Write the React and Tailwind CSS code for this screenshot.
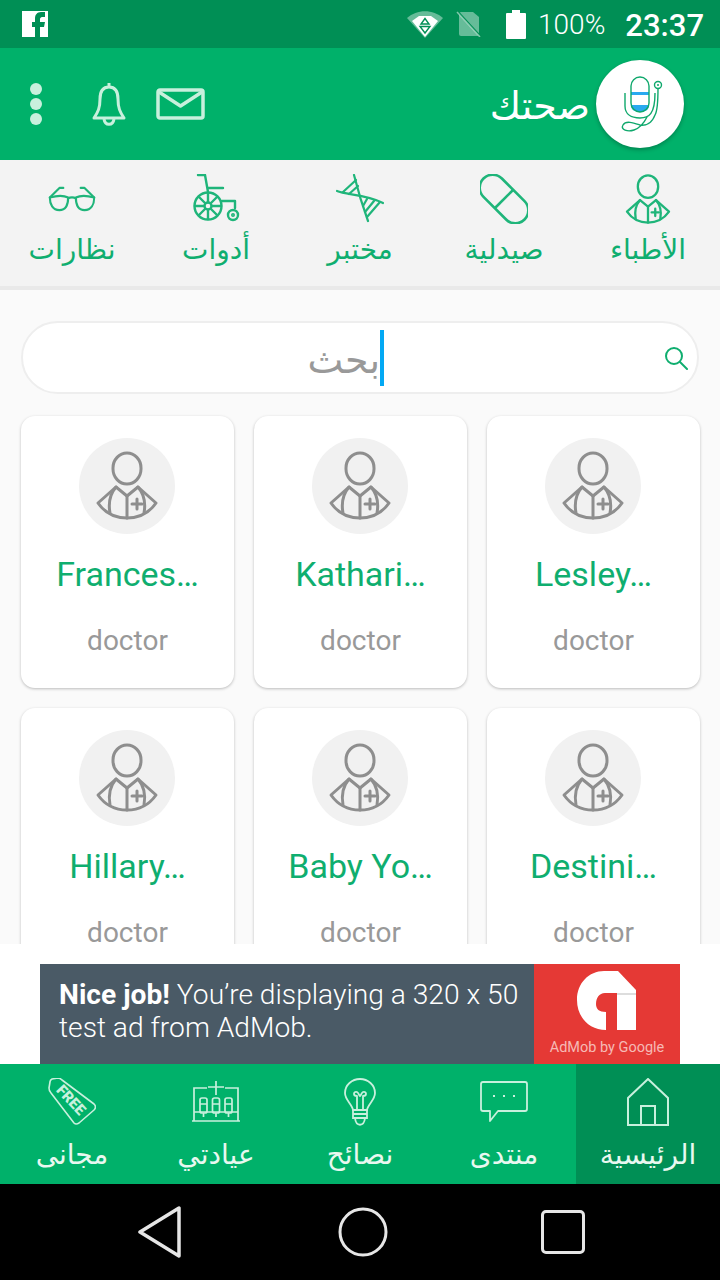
import React from "react";

const arabic = { fontFamily: '"Noto Sans", "DejaVu Sans", sans-serif' };

const DoctorIcon = ({ className, viewBox = "0 0 96 96", strokeWidth = 3 }) => (
  <svg className={className} viewBox={viewBox} fill="none" stroke="currentColor" strokeWidth={strokeWidth} strokeLinejoin="round" strokeLinecap="round">
    <rect x="34" y="15" width="28" height="31" rx="14" ry="15" />
    <path d="M19 65 L37 49 L48 58 L59 49 L77 65 C70 75 60 80 48 80 C36 80 26 75 19 65 Z" />
    <path d="M37 49 C31 56 29 64 31 75" />
    <path d="M59 49 C65 56 67 64 65 75" />
    <path d="M48 58 V80" />
    <path d="M53 66 H63 M58 61 V71" />
  </svg>
);

const PillIcon = ({ className }) => (
  <svg className={className} viewBox="0 0 48 50" fill="none" stroke="currentColor" strokeWidth="2.6">
    <rect x="-5" y="12" width="58" height="26" rx="13" transform="rotate(45 24 25)" />
    <path d="M15 34 L33 16" />
  </svg>
);

const DnaIcon = ({ className }) => (
  <svg className={className} viewBox="0 0 48 50" fill="none" stroke="currentColor" strokeWidth="2.2" strokeLinecap="round">
    <path d="M18 1 C21 13 24 25 32 47" />
    <path d="M1 17 C10 21 30 20 47 29" />
    <path d="M7 18 L20 6 M13 20 L22 12" />
    <path d="M31 25 L27 32 M38 27 L29 38 M44 28 L31 43" />
  </svg>
);

const WheelchairIcon = ({ className }) => (
  <svg className={className} viewBox="0 0 48 50" fill="none" stroke="currentColor" strokeWidth="2.4" strokeLinecap="round" strokeLinejoin="round">
    <path d="M6 1 H13 L16 18 M16 14 H31 M30 27 H43 V34" />
    <circle cx="16" cy="32" r="13.500" />
    <circle cx="16" cy="32" r="3.500" />
    <path d="M16 19 V28 M16 36 V45 M3 32 H12 M20 32 H29 M7 23 L13 29 M19 35 L25 41 M25 23 L19 29 M13 35 L7 41" />
    <circle cx="41" cy="41" r="5" />
    <circle cx="41" cy="41" r="0.800" />
  </svg>
);

const GlassesIcon = ({ className }) => (
  <svg className={className} viewBox="0 0 48 28" fill="none" stroke="currentColor" strokeWidth="2.2" strokeLinecap="round" strokeLinejoin="round">
    <path d="M1 13 C8 11 16 11 20 13 C20 20 18 26 11 26 C4 26 1 20 1 13 Z" />
    <path d="M47 13 C40 11 32 11 28 13 C28 20 30 26 37 26 C44 26 47 20 47 13 Z" />
    <path d="M20 14 C22 12.500 26 12.500 28 14" />
    <path d="M1 13 L11 3 H15 M47 13 L37 3 H33" />
  </svg>
);

const tabs = [
  { label: "نظارات", icon: <GlassesIcon className="mt-[11px] mb-[12px] h-[27px] w-[48px]" /> },
  { label: "أدوات", icon: <WheelchairIcon className="h-[50px] w-[48px]" /> },
  { label: "مختبر", icon: <DnaIcon className="h-[50px] w-[48px]" /> },
  { label: "صيدلية", icon: <PillIcon className="h-[50px] w-[48px]" /> },
  { label: "الأطباء", icon: <DoctorIcon className="h-[50px] w-[46px]" viewBox="17 13 62 69" strokeWidth={3.2} /> },
];

const doctors = ["Frances…", "Kathari…", "Lesley…", "Hillary…", "Baby Yo…", "Destini…"];

const FreeIcon = ({ className }) => (
  <svg className={className} viewBox="0 0 48 48" fill="none" stroke="currentColor" strokeWidth="1.6" strokeLinejoin="round">
    <path d="M4 1 L10 0 Q12 0 14 2 L46 26 Q49 29 46 32 L31 45 Q28 47 26 45 L3 15 Q1 13 1 10 L2 4 Q2 2 4 1 Z" />
    <text x="0" y="5" textAnchor="middle" transform="translate(23 22) rotate(47)" fill="currentColor" stroke="none" fontSize="15" fontWeight="900" fontFamily="Roboto, sans-serif">FREE</text>
  </svg>
);

const ClinicIcon = ({ className }) => (
  <svg className={className} viewBox="0 0 48 42" fill="none" stroke="currentColor" strokeWidth="1.7">
    <path d="M0 40 H48 M2 40 V7 H15 M33 7 H46 V40 M2 31 H46" />
    <path d="M24 0 V14 M16 6 H32" />
    <rect x="8" y="17" width="7" height="15" rx="2" />
    <rect x="20.500" y="17" width="7" height="15" rx="2" />
    <rect x="33" y="17" width="7" height="15" rx="2" />
    <path d="M8 23 H15 M20.500 23 H27.500 M33 23 H40 M11.500 32 V36 M24 32 V36 M36.500 32 V36" />
  </svg>
);

const BulbIcon = ({ className }) => (
  <svg className={className} viewBox="0 0 32 48" fill="none" stroke="currentColor" strokeWidth="1.8" strokeLinecap="round">
    <path d="M9 32 C8 26 1 22 1 15 C1 7 8 1 16 1 C24 1 31 7 31 15 C31 22 24 26 23 32 Z" />
    <path d="M13 32 V18 M19 32 V18 M13 18 C9 18 9 13 13 14 C15 15 15 18 16 18 C17 18 17 15 19 14 C23 13 23 18 19 18" />
    <path d="M9 32 V40 H23 V32 M9 36 H23 M11 40 C12 49 20 49 21 40" />
  </svg>
);

const ChatIcon = ({ className }) => (
  <svg className={className} viewBox="0 0 48 42" fill="none" stroke="currentColor" strokeWidth="1.8" strokeLinejoin="round">
    <path d="M3 1 H45 Q47 1 47 3 V28 Q47 30 45 30 H18 L10 40 V30 H3 Q1 30 1 28 V3 Q1 1 3 1 Z" />
    <path d="M13 15 h2 M23 15 h2 M33 15 h2" strokeWidth="2" />
  </svg>
);

const HomeIcon = ({ className }) => (
  <svg className={className} viewBox="0 0 42 48" fill="none" stroke="currentColor" strokeWidth="2">
    <path d="M1 47 V20 L21 1 L41 20 V47 Z" />
    <path d="M14 47 V28 H28 V47" />
  </svg>
);

const navItems = [
  { label: "مجانى", icon: <FreeIcon className="h-[48px] w-[48px]" /> },
  { label: "عيادتي", icon: <ClinicIcon className="h-[42px] w-[48px]" /> },
  { label: "نصائح", icon: <BulbIcon className="h-[48px] w-[32px]" /> },
  { label: "منتدى", icon: <ChatIcon className="h-[42px] w-[48px]" /> },
  { label: "الرئيسية", icon: <HomeIcon className="h-[48px] w-[42px]" />, active: true },
];

const Logo = () => (
  <div className="flex h-[88px] w-[88px] items-center justify-center rounded-full bg-white shadow-[0_2px_4px_rgba(0,0,0,0.25)]">
    <svg className="h-[88px] w-[88px]" viewBox="0 0 88 88" fill="none" strokeWidth="1.4">
      <path d="M35 45 H53 C53 50 49 52 44 52 C39 52 35 50 35 45 Z" fill="#29a9f0" />
      <rect x="35" y="32" width="18" height="3" fill="#29a9f0" />
      <rect x="35" y="17" width="18" height="35" rx="9" stroke="#0fa86c" />
      <path d="M29 33 V46 C29 54 35 58 44 58 C53 58 59 54 59 33" stroke="#0fa86c" />
      <path d="M62 28 C62 40 62 50 59 55 C56 63 50 66 44 65 C38 63 30 60 27 65 C24 70 32 72 38 70 C44 68 48 63 51 57" stroke="#0fa86c" />
      <circle cx="62" cy="25" r="3.500" stroke="#0fa86c" />
      <circle cx="62" cy="25" r="1" fill="#0fa86c" />
    </svg>
  </div>
);

const StatusBar = () => (
  <div className="flex h-[48px] items-center justify-between bg-[#008f55] pl-[22px] pr-[16px] text-white">
    <svg className="h-[26px] w-[26px]" viewBox="0 0 26 26">
      <path fill="#fff" d="M0 0 H26 V26 H18 V16 H22 L23 11 H18 V8 C18 7 19 6 20 6 H23 V1 H19 C15 1 13 4 13 7 V11 H10 V16 H13 V26 H0 Z" />
    </svg>
    <div className="flex items-center">
      <svg className="h-[28px] w-[36px]" viewBox="0 0 36 28">
        <path fill="#fff" opacity="0.4" d="M0 8 C10 -1 26 -1 36 8 L18 28 Z" />
        <path fill="#fff" d="M5 11 L12 6 H24 L31 11 L18 27 Z" />
        <path fill="none" stroke="#008f55" strokeWidth="1.400" d="M18 8.500 L14 14 H22 Z M13 16.500 H23 L18 23 Z" />
      </svg>
      <svg className="ml-[13px] h-[26px] w-[26px]" viewBox="0 0 26 26">
        <path fill="#fff" opacity="0.4" d="M3 3 Q3 1 5 1 H17 L23 6 V23 Q23 25 21 25 H5 Q3 25 3 23 Z" />
        <path stroke="#008f55" strokeWidth="2" d="M2 1 L25 26" />
        <path stroke="#fff" opacity="0.5" strokeWidth="1.500" d="M1 1 L24 26" />
      </svg>
      <svg className="ml-[24px] h-[29px] w-[20px]" viewBox="0 0 20 29">
        <path fill="#fff" d="M6 0 H14 V3 H19 Q20 3 20 4 V28 Q20 29 19 29 H1 Q0 29 0 28 V4 Q0 3 1 3 H6 Z" />
      </svg>
      <span className="ml-[12px] mt-[2px] text-[28px] font-light leading-none [font-family:Roboto,sans-serif]">100%</span>
      <span className="ml-[20px] mt-[2px] text-[31px] font-medium leading-none [font-family:Roboto,sans-serif]">23:37</span>
    </div>
  </div>
);

const Header = () => (
  <div className="flex h-[112px] items-center justify-between bg-[#00b16a] pl-[30px] pr-[36px]">
    <div className="flex items-center text-[#c8f0dd]">
      <div className="flex flex-col gap-[3px]">
        <span className="h-[12px] w-[12px] rounded-full bg-[#c8f0dd]" />
        <span className="h-[12px] w-[12px] rounded-full bg-[#c8f0dd]" />
        <span className="h-[12px] w-[12px] rounded-full bg-[#c8f0dd]" />
      </div>
      <svg className="ml-[50px] h-[44px] w-[34px]" viewBox="0 0 34 44" fill="none" stroke="currentColor" strokeWidth="3" strokeLinejoin="round">
        <path d="M17 1 V5 M17 5 C24 5 26 11 26 17 C26 26 28 30 32 36 H2 C6 30 8 26 8 17 C8 11 10 5 17 5 Z" />
        <path d="M12 37 C13 44 21 44 22 37" />
      </svg>
      <svg className="ml-[30px] h-[32px] w-[49px]" viewBox="0 0 49 32" fill="none" stroke="currentColor" strokeWidth="3.500" strokeLinejoin="round">
        <rect x="2" y="2" width="45" height="28" rx="2" />
        <path d="M3 4 L24.500 18 L46 4" />
      </svg>
    </div>
    <div className="flex items-center gap-[6px]">
      <span style={arabic} className="text-[38px] leading-none text-white">صحتك</span>
      <Logo />
    </div>
  </div>
);

const CategoryTabs = () => (
  <div className="flex h-[130px] border-b-4 border-[#e9e9e9] bg-[#f3f3f3] pt-[14px] text-[#1fb57a]">
    {tabs.map((tab) => (
      <div key={tab.label} className="flex w-[144px] flex-col items-center">
        <div className="flex h-[50px] items-start justify-center">{tab.icon}</div>
        <span style={arabic} className="mt-[5px] text-[28px] leading-[38px] text-[#0fae6f]">{tab.label}</span>
      </div>
    ))}
  </div>
);

const SearchBox = () => (
  <div className="mx-[21px] flex h-[73px] items-center justify-end rounded-full border-2 border-[#eeeeee] bg-white pr-[9px]">
    <span style={arabic} className="text-[38px] leading-none text-[#999999]">بحث</span>
    <span className="h-[56px] w-[4px] bg-[#03a9f4]" />
    <svg className="ml-[280px] h-[24px] w-[24px]" viewBox="0 0 24 24" fill="none" stroke="#0fae6f" strokeWidth="2" strokeLinecap="round">
      <circle cx="10" cy="10" r="8" />
      <path d="M16 16 L23 23" />
    </svg>
  </div>
);

const DoctorCard = ({ name }) => (
  <div className="flex h-[272px] flex-col items-center rounded-[14px] bg-white pt-[22px] shadow-[0_1px_3px_rgba(0,0,0,0.25)]">
    <div className="mr-[1px] flex h-[96px] w-[96px] items-center justify-center rounded-full bg-[#f1f1f1] text-[#8e8e8e]">
      <DoctorIcon className="h-[96px] w-[96px]" />
    </div>
    <p className="mt-[17px] text-[34px] leading-[46px] text-[#0fae6f] [font-family:Roboto,sans-serif]">{name}</p>
    <p className="mt-[25px] text-[28px] leading-[38px] text-[#999999] [font-family:Roboto,sans-serif]">doctor</p>
  </div>
);

const AdBanner = () => (
  <div className="flex h-[120px] justify-center bg-white pt-[20px]">
    <div className="flex w-[640px] bg-[#4a5a66]">
      <p className="w-[494px] pl-[19px] pt-[14px] text-[28.200px] font-light leading-[33px] text-white [font-family:Roboto,sans-serif]">
        <span className="font-bold">Nice job!</span> You’re displaying a 320 x 50 test ad from AdMob.
      </p>
      <div className="flex w-[146px] flex-col items-center bg-[#e53935] pt-[7px]">
        <svg className="h-[59px] w-[60px]" viewBox="0 0 60 59">
          <path fill="#fff" d="M27 0 H41 L59 19 V59 H40 V22 H28 C22 22 19 27 19 33 C19 38 22 41 29 41 V59 C12 59 0 46 0 29 C0 12 12 0 27 0 Z" />
          <rect x="40" y="22" width="19" height="2" fill="#dddddd" />
        </svg>
        <span className="mt-[9px] text-[14.500px] leading-[18px] text-[#f6b9b5] [font-family:Roboto,sans-serif]">AdMob by Google</span>
      </div>
    </div>
  </div>
);

const BottomNav = () => (
  <div className="flex h-[120px] bg-[#00b16a] text-[#c8f0dd]">
    {navItems.map((item) => (
      <div key={item.label} className={`flex w-[144px] flex-col items-center pt-[14px] ${item.active ? "bg-[#008f55]" : ""}`}>
        <div className="flex h-[48px] items-center justify-center">{item.icon}</div>
        <span style={arabic} className="mt-[8px] text-[28px] leading-[38px] text-[#e8f8f0]">{item.label}</span>
      </div>
    ))}
  </div>
);

const SystemNav = () => (
  <div className="flex h-[96px] items-center bg-black pl-[138px]">
    <svg className="h-[52px] w-[44px]" viewBox="0 0 44 52" fill="none" stroke="#e6e6e6" strokeWidth="3.500" strokeLinejoin="round">
      <path d="M41 2 V50 L2 26 Z" />
    </svg>
    <svg className="ml-[156px] h-[50px] w-[50px]" viewBox="0 0 50 50" fill="none" stroke="#e6e6e6" strokeWidth="3">
      <circle cx="25" cy="25" r="23" />
    </svg>
    <span className="ml-[153px] h-[44px] w-[44px] rounded-[5px] border-[3px] border-[#e6e6e6]" />
  </div>
);

export default function App() {
  return (
    <div className="flex h-[1280px] w-[720px] flex-col overflow-hidden bg-white">
      <StatusBar />
      <Header />
      <CategoryTabs />
      <div className="h-[654px] overflow-hidden bg-[#fafafa] pt-[31px]">
        <SearchBox />
        <div className="mt-[22px] grid grid-cols-3 gap-x-[20px] gap-y-[20px] pl-[21px] pr-[20px]">
          {doctors.map((name) => (
            <DoctorCard key={name} name={name} />
          ))}
        </div>
      </div>
      <AdBanner />
      <BottomNav />
      <SystemNav />
    </div>
  );
}
